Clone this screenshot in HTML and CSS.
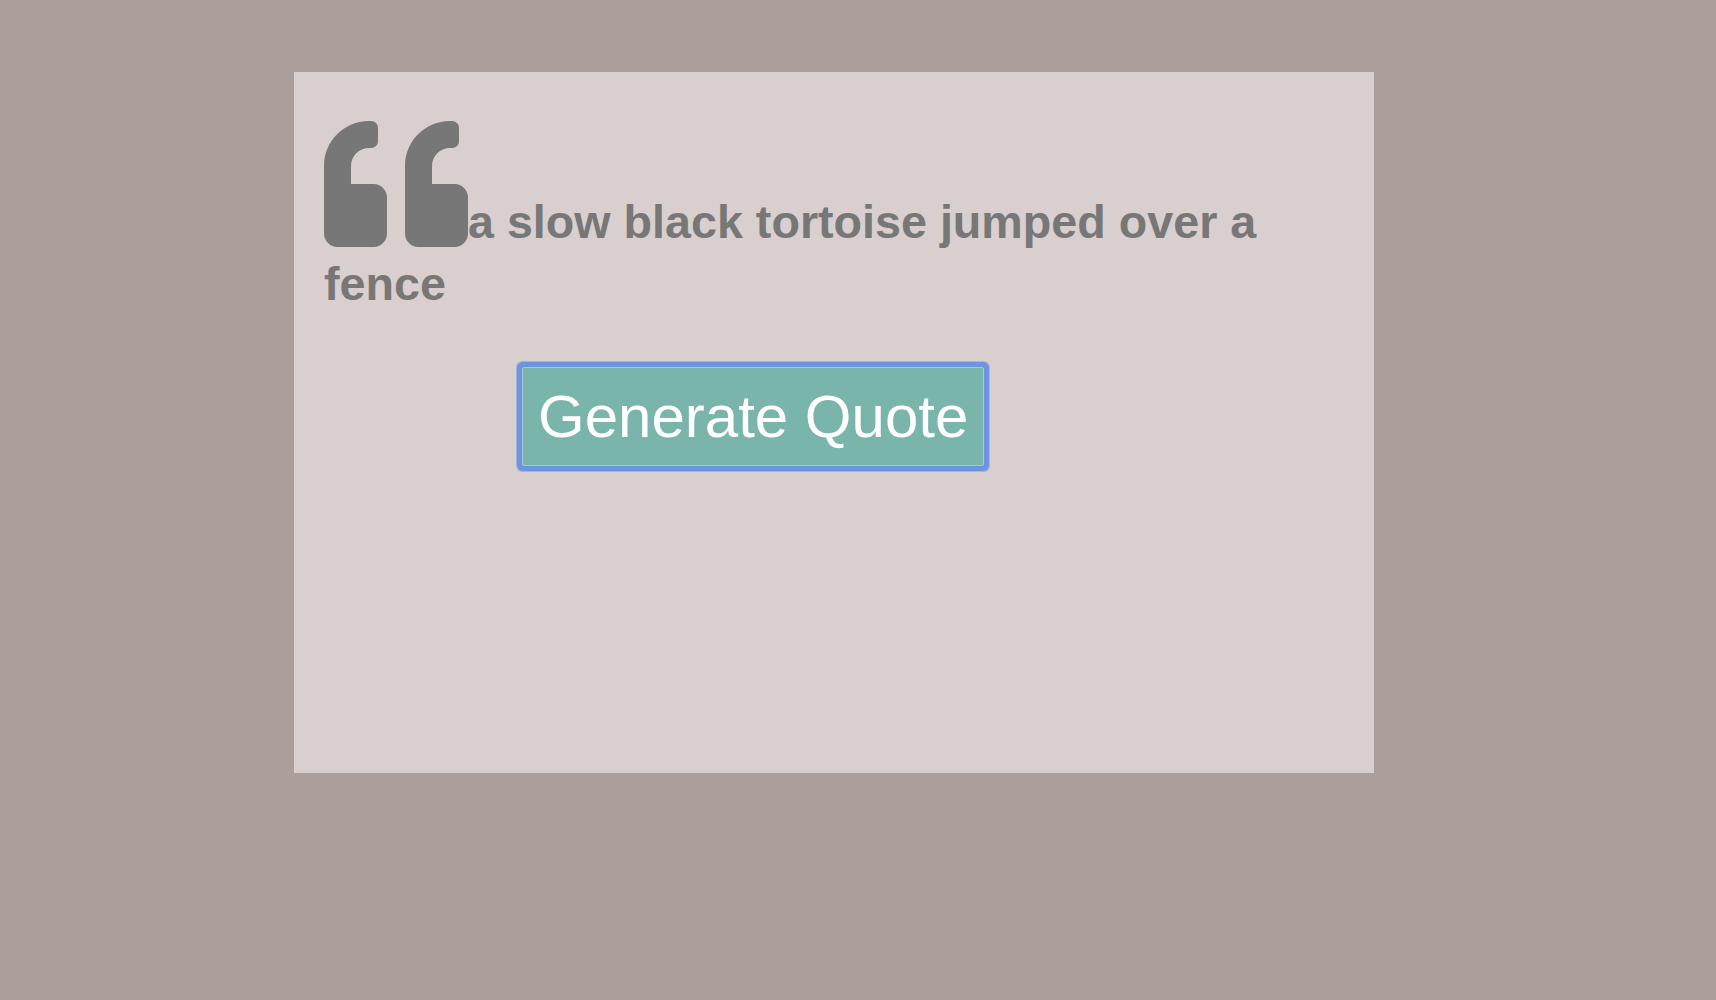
FILE: index.html
```html
<!DOCTYPE html>
<html>
<head>
<meta charset="utf-8">
<link rel="stylesheet" href="styles.css">
</head>
<body>
<div class="card">
  <p class="quote"><svg class="quote-icon" viewBox="0 0 512 512" width="144" height="144"><path fill="currentColor" d="M464 256h-80v-64c0-35.3 28.7-64 64-64h8c13.3 0 24-10.7 24-24V56c0-13.3-10.7-24-24-24h-8c-88.4 0-160 71.6-160 160v240c0 26.5 21.5 48 48 48h128c26.5 0 48-21.5 48-48V304c0-26.5-21.5-48-48-48zm-288 0H96v-64c0-35.3 28.7-64 64-64h8c13.3 0 24-10.7 24-24V56c0-13.3-10.7-24-24-24h-8C71.6 32 0 103.6 0 192v240c0 26.5 21.5 48 48 48h128c26.5 0 48-21.5 48-48V304c0-26.5-21.5-48-48-48z"/></svg>a slow black tortoise jumped over a fence</p>
  <div class="actions">
    <button class="generate">Generate Quote</button>
  </div>
</div>
</body>
</html>
```
FILE: styles.css
```css
html, body {
  margin: 0;
  padding: 0;
  background: #ac9f9b;
}
body {
  font-family: "Liberation Sans", Arial, sans-serif;
  padding-top: 72px;
  padding-left: 294px;
  min-height: 1000px;
  box-sizing: border-box;
}
.card {
  box-sizing: border-box;
  width: 1080px;
  height: 701px;
  background: #d8cfce;
  padding: 40px 30px 30px 30px;
}
.quote {
  margin: 0;
  color: #777777;
  font-weight: bold;
  font-size: 46.67px;
  line-height: 1.2;
}
.quote-icon {
  vertical-align: -18px;
  color: #777777;
}
.actions {
  margin-top: 55px;
  padding-left: 198px;
}
.generate {
  font-family: "Liberation Sans", Arial, sans-serif;
  font-size: 60px;
  line-height: normal;
  color: #ffffff;
  background: #7ab5ac;
  border: 1px solid #a6cbc5;
  padding: 14px 15px;
  border-radius: 2px;
  box-shadow: 0 0 0 5px #6e93e4, 0 0 0 6px rgba(110, 147, 228, 0.45);
  cursor: pointer;
}
```
